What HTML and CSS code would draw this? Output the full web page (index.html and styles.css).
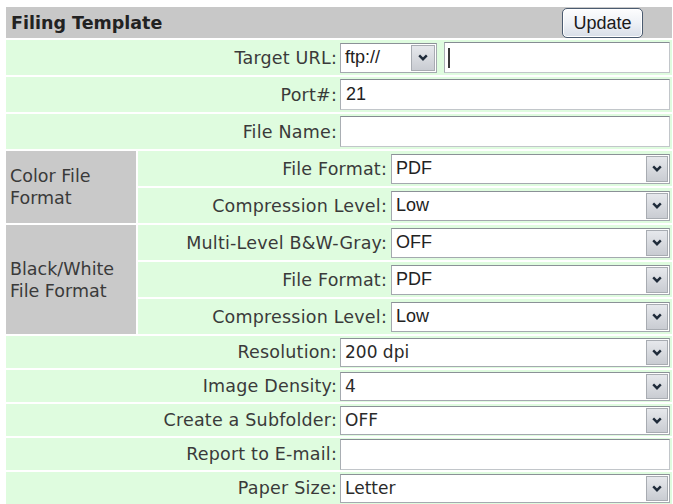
FILE: index.html
```html
<!DOCTYPE html>
<html>
<head>
<meta charset="utf-8">
<title>Filing Template</title>
<link rel="stylesheet" href="styles.css">
</head>
<body>
<div class="panel">
  <div class="head">
    <span class="title">Filing Template</span>
    <button class="btn" type="button">Update</button>
  </div>

  <div class="row tall">
    <div class="lab">Target URL:</div>
    <div class="fld url">
      <div class="sel proto arial"><span class="val">ftp://</span><span class="arr"><svg width="10" height="7" viewBox="0 0 10 7"><path d="M1.2 1.4 L5 5.2 L8.8 1.4" fill="none" stroke="#1f2b3a" stroke-width="2.4"/></svg></span></div>
      <div class="txt grow"><span class="caret"></span></div>
    </div>
  </div>
  <div class="row tall">
    <div class="lab">Port#:</div>
    <div class="fld"><div class="txt grow arial"><span class="val">21</span></div></div>
  </div>
  <div class="row tall">
    <div class="lab">File Name:</div>
    <div class="fld"><div class="txt grow"></div></div>
  </div>

  <div class="group">
    <div class="gname">Color File Format</div>
    <div class="sub">
      <div class="row tall">
        <div class="lab">File Format:</div>
        <div class="fld"><div class="sel grow arial"><span class="val">PDF</span><span class="arr"><svg width="10" height="7" viewBox="0 0 10 7"><path d="M1.2 1.4 L5 5.2 L8.8 1.4" fill="none" stroke="#1f2b3a" stroke-width="2.4"/></svg></span></div></div>
      </div>
      <div class="row tall">
        <div class="lab">Compression Level:</div>
        <div class="fld"><div class="sel grow arial"><span class="val">Low</span><span class="arr"><svg width="10" height="7" viewBox="0 0 10 7"><path d="M1.2 1.4 L5 5.2 L8.8 1.4" fill="none" stroke="#1f2b3a" stroke-width="2.4"/></svg></span></div></div>
      </div>
    </div>
  </div>

  <div class="group">
    <div class="gname">Black/White File Format</div>
    <div class="sub">
      <div class="row tall">
        <div class="lab">Multi-Level B&amp;W-Gray:</div>
        <div class="fld"><div class="sel grow arial"><span class="val">OFF</span><span class="arr"><svg width="10" height="7" viewBox="0 0 10 7"><path d="M1.2 1.4 L5 5.2 L8.8 1.4" fill="none" stroke="#1f2b3a" stroke-width="2.4"/></svg></span></div></div>
      </div>
      <div class="row tall">
        <div class="lab">File Format:</div>
        <div class="fld"><div class="sel grow arial"><span class="val">PDF</span><span class="arr"><svg width="10" height="7" viewBox="0 0 10 7"><path d="M1.2 1.4 L5 5.2 L8.8 1.4" fill="none" stroke="#1f2b3a" stroke-width="2.4"/></svg></span></div></div>
      </div>
      <div class="row tall">
        <div class="lab">Compression Level:</div>
        <div class="fld"><div class="sel grow arial"><span class="val">Low</span><span class="arr"><svg width="10" height="7" viewBox="0 0 10 7"><path d="M1.2 1.4 L5 5.2 L8.8 1.4" fill="none" stroke="#1f2b3a" stroke-width="2.4"/></svg></span></div></div>
      </div>
    </div>
  </div>

  <div class="row short">
    <div class="lab">Resolution:</div>
    <div class="fld"><div class="sel grow sm"><span class="val">200 dpi</span><span class="arr"><svg width="10" height="7" viewBox="0 0 10 7"><path d="M1.2 1.4 L5 5.2 L8.8 1.4" fill="none" stroke="#1f2b3a" stroke-width="2.4"/></svg></span></div></div>
  </div>
  <div class="row short">
    <div class="lab">Image Density:</div>
    <div class="fld"><div class="sel grow sm"><span class="val">4</span><span class="arr"><svg width="10" height="7" viewBox="0 0 10 7"><path d="M1.2 1.4 L5 5.2 L8.8 1.4" fill="none" stroke="#1f2b3a" stroke-width="2.4"/></svg></span></div></div>
  </div>
  <div class="row short">
    <div class="lab">Create a Subfolder:</div>
    <div class="fld"><div class="sel grow sm"><span class="val">OFF</span><span class="arr"><svg width="10" height="7" viewBox="0 0 10 7"><path d="M1.2 1.4 L5 5.2 L8.8 1.4" fill="none" stroke="#1f2b3a" stroke-width="2.4"/></svg></span></div></div>
  </div>
  <div class="row short">
    <div class="lab">Report to E-mail:</div>
    <div class="fld"><div class="txt grow"></div></div>
  </div>
  <div class="row short">
    <div class="lab">Paper Size:</div>
    <div class="fld"><div class="sel grow sm"><span class="val">Letter</span><span class="arr"><svg width="10" height="7" viewBox="0 0 10 7"><path d="M1.2 1.4 L5 5.2 L8.8 1.4" fill="none" stroke="#1f2b3a" stroke-width="2.4"/></svg></span></div></div>
  </div>
</div>
</body>
</html>
```

FILE: styles.css
```css
html, body {
  margin: 0;
  padding: 0;
  background: #ffffff;
}

body {
  font-family: "DejaVu Sans", Verdana, sans-serif;
  color: #3a3a3a;
  overflow: hidden;
}

.panel {
  width: 666px;
  margin: 7px 1px 0 6px;
  display: flex;
  flex-direction: column;
  gap: 2px;
}

.head {
  height: 31px;
  background: #c8c8c8;
  display: flex;
  align-items: center;
  justify-content: space-between;
  padding: 0 29px 0 5px;
}

.title {
  font-weight: bold;
  font-size: 17.5px;
  color: #222222;
}

.btn {
  width: 81px;
  height: 30px;
  margin-top: 1px;
  border: 1px solid #4b5b70;
  border-radius: 5px;
  background: linear-gradient(#fdfdfe 0%, #eef1f6 50%, #d8dee8 100%);
  box-shadow: inset 0 0 0 1px #ffffff;
  font-family: "Liberation Sans", Arial, sans-serif;
  font-size: 18px;
  color: #1a1a1a;
  padding: 0;
}

.row {
  background: #dffcdf;
  display: flex;
  align-items: center;
}

.row.tall {
  height: 35px;
}

.row.short {
  height: 32px;
}

.lab {
  width: 331px;
  padding-right: 2px;
  text-align: right;
  font-size: 17.5px;
  letter-spacing: 0.2px;
  white-space: nowrap;
  color: #3a3a3a;
}

.fld {
  flex: 1;
  display: flex;
  align-items: center;
  padding: 0 2px 0 1px;
}

.url {
  gap: 7px;
}

.grow {
  flex: 1;
}

.txt {
  height: 31px;
  box-sizing: border-box;
  background: #ffffff;
  border: 1px solid #c2c6ca;
  border-top-color: #868c93;
  border-left-color: #a9aeb3;
  display: flex;
  align-items: center;
  padding-left: 2px;
}

.caret {
  width: 2px;
  height: 20px;
  margin-left: 1px;
  background: #3a3a3a;
}

.sel {
  height: 30px;
  box-sizing: border-box;
  background: #ffffff;
  border: 1px solid #a4a9af;
  border-top-color: #8b9197;
  display: flex;
  align-items: center;
  justify-content: space-between;
  padding: 1px;
}

.sel.sm {
  height: 29px;
}

.proto {
  width: 97px;
}

.val {
  padding-left: 3px;
  color: #222222;
}

.arial .val {
  font-family: "Liberation Sans", Arial, sans-serif;
  font-size: 18px;
}

.sm .val {
  font-family: "DejaVu Sans", Verdana, sans-serif;
  font-size: 17px;
  color: #2a2a2a;
}

.arr {
  width: 22px;
  align-self: stretch;
  box-sizing: border-box;
  border: 1px solid #a8acb2;
  background: linear-gradient(#e6e8ec, #c9ccd2);
  display: flex;
  align-items: center;
  justify-content: center;
}

.proto .arr {
  width: 24px;
}

.arr svg {
  display: block;
}

.group {
  display: flex;
  gap: 2px;
}

.gname {
  width: 126px;
  padding-left: 4px;
  background: #c9c9c9;
  display: flex;
  align-items: center;
  font-size: 17.5px;
  line-height: 22px;
  color: #3a3a3a;
}

.sub {
  flex: 1;
  display: flex;
  flex-direction: column;
  gap: 2px;
}

.sub .lab {
  width: 249px;
}

.sub .fld {
  padding-left: 2px;
}
```
